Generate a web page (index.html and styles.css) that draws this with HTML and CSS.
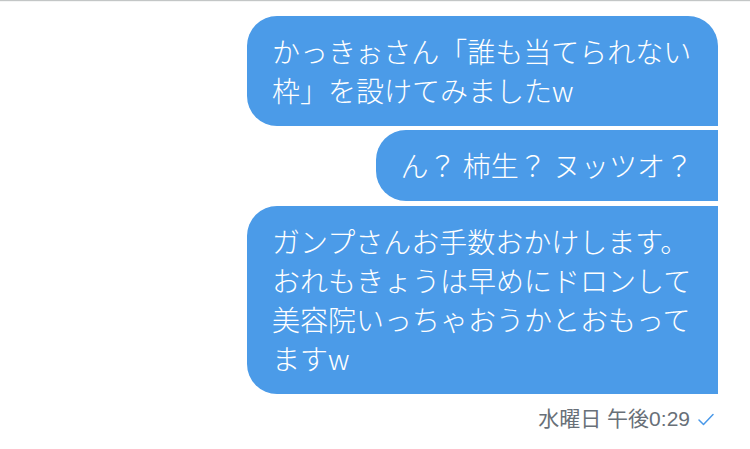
FILE: index.html
```html
<!DOCTYPE html>
<html lang="ja">
<head>
<meta charset="utf-8">
<title>DM</title>
<link rel="stylesheet" href="styles.css">
</head>
<body>
<div class="thread">
  <div class="msg first">かっきぉさん「誰も当てられない枠」を設けてみましたw</div>
  <div class="msg">ん？ 柿生？ ヌッツオ？</div>
  <div class="msg last">ガンプさんお手数おかけします。おれもきょうは早めにドロンして美容院いっちゃおうかとおもってますw</div>
  <div class="meta">
    <span>水曜日 午後0:29</span>
    <svg class="check" width="16" height="13" viewBox="0 0 16 13"><path d="M1 7 L5.5 11.5 L15 1.5" fill="none" stroke="#4a99e9" stroke-width="1.5" stroke-linecap="round" stroke-linejoin="round"/></svg>
  </div>
</div>
</body>
</html>
```

FILE: styles.css
```css
html, body {
  margin: 0;
  background: #ffffff;
}

.thread {
  border-top: 1px solid #c3c6c6;
  box-shadow: inset 0 1px 0 #f4f5f5;
  padding: 15px 32px 0 0;
  display: flex;
  flex-direction: column;
  align-items: flex-end;
  gap: 4px;
  font-family: "Noto Sans CJK JP", "Noto Sans", sans-serif;
}

.msg {
  box-sizing: border-box;
  max-width: 471px;
  padding: 16px 25px;
  background: #4b9be8;
  color: #ffffff;
  font-size: 28px;
  line-height: 39px;
  font-weight: 300;
  border-radius: 30px 0 0 30px;
}

.msg.first {
  border-top-right-radius: 30px;
}

.msg.last {
  margin-top: 1px;
}

.meta {
  margin-top: 9px;
  margin-right: 4px;
  display: flex;
  align-items: center;
  gap: 8px;
  font-family: "Liberation Sans", "Noto Sans CJK JP", sans-serif;
  font-size: 21px;
  line-height: 24px;
  color: #687078;
}

.check {
  display: block;
}
```
